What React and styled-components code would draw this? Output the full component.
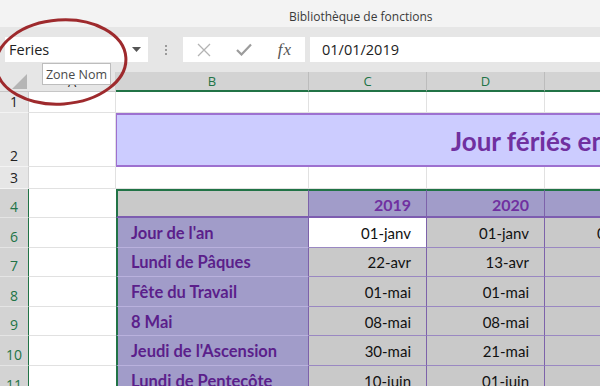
import React from "react"
import styled, { createGlobalStyle } from "styled-components"

const GlobalStyle = createGlobalStyle`
  html, body { margin: 0; padding: 0; }
  body {
    width: 600px;
    height: 386px;
    overflow: hidden;
    background: #ffffff;
    font-family: "Open Sans", "Noto Sans", sans-serif;
  }
`

const green = "#217346"
const purpleBg = "#a19cc9"
const greyBg = "#c9c9c9"
const lineGrid = "#e1e1e1"
const lineData = "#9a88c2"
const lineDataV = "#7d62aa"

const holidays = [
  { row: 6, label: "Jour de l'an", dates: ["01-janv", "01-janv", "01-janv"] },
  { row: 7, label: "Lundi de Pâques", dates: ["22-avr", "13-avr", "05-avr"] },
  { row: 8, label: "Fête du Travail", dates: ["01-mai", "01-mai", "01-mai"] },
  { row: 9, label: "8 Mai", dates: ["08-mai", "08-mai", "08-mai"] },
  { row: 10, label: "Jeudi de l'Ascension", dates: ["30-mai", "21-mai", "13-mai"] },
  { row: 11, label: "Lundi de Pentecôte", dates: ["10-juin", "01-juin", "24-mai"] },
]

const App = () => {
  return (
    <Window>
      <GlobalStyle />
      <Ribbon>Bibliothèque de fonctions</Ribbon>
      <FormulaBar>
        <NameBox>
          <span>Feries</span>
          <svg width="9" height="5" viewBox="0 0 9 5">
            <path d="M0 0 L9 0 L4.5 5 Z" fill="#555" />
          </svg>
        </NameBox>
        <Grip>
          <i />
          <i />
          <i />
        </Grip>
        <ButtonBox>
          <svg width="14" height="14" viewBox="0 0 14 14">
            <path d="M1 1 L13 13 M13 1 L1 13" stroke="#b3b3b3" strokeWidth="1.3" fill="none" />
          </svg>
          <svg width="16" height="13" viewBox="0 0 16 13">
            <path d="M1 7 L5.5 11.5 L15 1.5" stroke="#9c9c9c" strokeWidth="2.2" fill="none" />
          </svg>
          <Fx>fx</Fx>
        </ButtonBox>
        <FormulaInput>01/01/2019</FormulaInput>
      </FormulaBar>

      <Sheet>
        <Corner>
          <svg width="15" height="15" viewBox="0 0 15 15">
            <path d="M15 0 L15 15 L0 15 Z" fill="#b5b5b5" />
          </svg>
        </Corner>
        <ColHead>A</ColHead>
        <ColHead $sel>B</ColHead>
        <ColHead $sel>C</ColHead>
        <ColHead $sel>D</ColHead>
        <ColHead $sel>E</ColHead>

        <RowHead>1</RowHead>
        <Cell />
        <Cell />
        <Cell />
        <Cell />
        <Cell />

        <RowHead>2</RowHead>
        <Cell />
        <TitleCell>Jour fériés en France</TitleCell>

        <RowHead>3</RowHead>
        <Cell />
        <Cell />
        <Cell />
        <Cell />
        <Cell />

        <RowHead $sel>4</RowHead>
        <Cell $edge />
        <CornerCell />
        <YearCell>2019</YearCell>
        <YearCell>2020</YearCell>
        <YearCell>2021</YearCell>

        {holidays.map((h) => (
          <React.Fragment key={h.row}>
            <RowHead $sel>{h.row}</RowHead>
            <Cell $edge />
            <LabelCell>{h.label}</LabelCell>
            {h.dates.map((d, i) => (
              <DateCell key={i} $active={h.row === 6 && i === 0}>
                {d}
              </DateCell>
            ))}
          </React.Fragment>
        ))}
      </Sheet>

      <Tooltip>Zone Nom</Tooltip>
      <Circle width="150" height="120" viewBox="0 0 150 120">
        <ellipse
          cx="61"
          cy="62"
          rx="65"
          ry="42"
          transform="rotate(-4 61 62)"
          fill="none"
          stroke="#9e2a2d"
          strokeWidth="3"
        />
      </Circle>
    </Window>
  )
}

const Window = styled.div`
  position: relative;
  width: 600px;
  height: 386px;
  overflow: hidden;
  display: flex;
  flex-direction: column;
  & > * {
    flex-shrink: 0;
  }
`

const Ribbon = styled.div`
  height: 27px;
  box-sizing: border-box;
  padding: 8px 0 0 289px;
  background: #f3f3f3;
  color: #3a3a3a;
  font-size: 12px;
  white-space: nowrap;
`

const FormulaBar = styled.div`
  height: 45px;
  box-sizing: border-box;
  padding: 10px 0 0 5px;
  background: #e6e6e6;
  display: flex;
  align-items: flex-start;
`

const WhiteBox = styled.div`
  height: 25px;
  box-sizing: border-box;
  background: #ffffff;
  display: flex;
  align-items: center;
`

const NameBox = styled(WhiteBox)`
  width: 143px;
  justify-content: space-between;
  padding: 0 7px 0 4px;
  font-size: 14.5px;
  color: #222;
`

const Grip = styled.div`
  width: 35px;
  height: 25px;
  display: flex;
  flex-direction: column;
  align-items: center;
  justify-content: center;
  gap: 2px;
  i {
    width: 2px;
    height: 2px;
    background: #9a9a9a;
  }
`

const ButtonBox = styled(WhiteBox)`
  width: 122px;
  justify-content: space-between;
  padding: 0 13px 0 14px;
`

const Fx = styled.span`
  font-family: "Liberation Serif", "DejaVu Serif", serif;
  font-style: italic;
  font-size: 17px;
  color: #555;
  letter-spacing: 1px;
`

const FormulaInput = styled(WhiteBox)`
  flex: 1;
  margin-left: 5px;
  padding-left: 12px;
  font-size: 14.5px;
  color: #222;
`

const Sheet = styled.div`
  display: grid;
  grid-template-columns: 29px 87px 193px 118px 118px 118px;
  grid-template-rows: 20px 21px 54px 22px 29px repeat(6, 29.6px);
  width: 663px;
  font-family: Lato, "Open Sans", sans-serif;
`

const Corner = styled.div`
  background: #e6e6e6;
  display: flex;
  align-items: flex-end;
  justify-content: flex-end;
  padding: 0 2px 2px 0;
  box-sizing: border-box;
  border-bottom: 1px solid #c6c6c6;
`

const ColHead = styled.div`
  box-sizing: border-box;
  background: ${(p) => (p.$sel ? "#d3d3d3" : "#e6e6e6")};
  color: ${(p) => (p.$sel ? green : "#222")};
  border-right: 1px solid ${(p) => (p.$sel ? "#bcbcbc" : "#d0d0d0")};
  border-bottom: ${(p) => (p.$sel ? `2px solid ${green}` : "1px solid #c6c6c6")};
  font-family: "Open Sans", sans-serif;
  font-size: 13px;
  display: flex;
  align-items: center;
  justify-content: center;
`

const RowHead = styled.div`
  box-sizing: border-box;
  background: ${(p) => (p.$sel ? "#d3d3d3" : "#e6e6e6")};
  color: ${(p) => (p.$sel ? green : "#222")};
  border-bottom: 1px solid ${(p) => (p.$sel ? "#e4e4e4" : "#f3f3f3")};
  border-right: 1px solid ${(p) => (p.$sel ? green : "#d0d0d0")};
  font-family: "Open Sans", sans-serif;
  font-size: 14px;
  display: flex;
  align-items: flex-end;
  justify-content: center;
  padding-bottom: 1px;
`

const Cell = styled.div`
  box-sizing: border-box;
  background: #ffffff;
  border-bottom: 1px solid ${lineGrid};
  border-right: ${(p) => (p.$edge ? "none" : `1px solid ${lineGrid}`)};
`

const TitleCell = styled.div`
  grid-column: 3 / -1;
  box-sizing: border-box;
  background: #ccccff;
  border-top: 2px solid #9d70d0;
  border-bottom: 2px solid #9d70d0;
  border-left: 1px solid #9d70d0;
  padding: 2px 0 0 334px;
  display: flex;
  align-items: center;
  color: #7030a0;
  font-weight: 700;
  font-size: 26px;
  white-space: nowrap;
  overflow: hidden;
`

const DataCell = styled.div`
  box-sizing: border-box;
  display: flex;
  align-items: center;
  padding-top: 1px;
  white-space: nowrap;
  font-size: 15px;
  border-right: 1px solid ${lineDataV};
  border-bottom: 1px solid ${lineData};
`

const CornerCell = styled(DataCell)`
  background: ${greyBg};
  border-top: 2px solid ${green};
  border-left: 2px solid ${green};
  border-bottom: 2px solid #7d5db0;
`

const YearCell = styled(DataCell)`
  background: ${purpleBg};
  border-top: 2px solid ${green};
  border-bottom: 2px solid #7d5db0;
  justify-content: flex-end;
  padding-right: 15px;
  color: #7030a0;
  font-weight: 700;
  font-size: 16px;
`

const LabelCell = styled(DataCell)`
  background: ${purpleBg};
  border-left: 2px solid ${green};
  border-bottom-color: #b9b1dd;
  padding-left: 13px;
  color: #5b1f8b;
  font-weight: 700;
  font-size: 16.5px;
`

const DateCell = styled(DataCell)`
  background: ${(p) => (p.$active ? "#ffffff" : greyBg)};
  justify-content: flex-end;
  padding-right: 15px;
  color: #111;
`

const Tooltip = styled.div`
  position: absolute;
  left: 42px;
  top: 63px;
  width: 69px;
  height: 22px;
  box-sizing: border-box;
  background: #ffffff;
  border: 1px solid #bdbdbd;
  font-size: 12.5px;
  color: #4a4a4a;
  display: flex;
  align-items: center;
  justify-content: center;
  white-space: nowrap;
`

const Circle = styled.svg`
  position: absolute;
  left: 0;
  top: 0;
  overflow: visible;
  pointer-events: none;
`

export default App
